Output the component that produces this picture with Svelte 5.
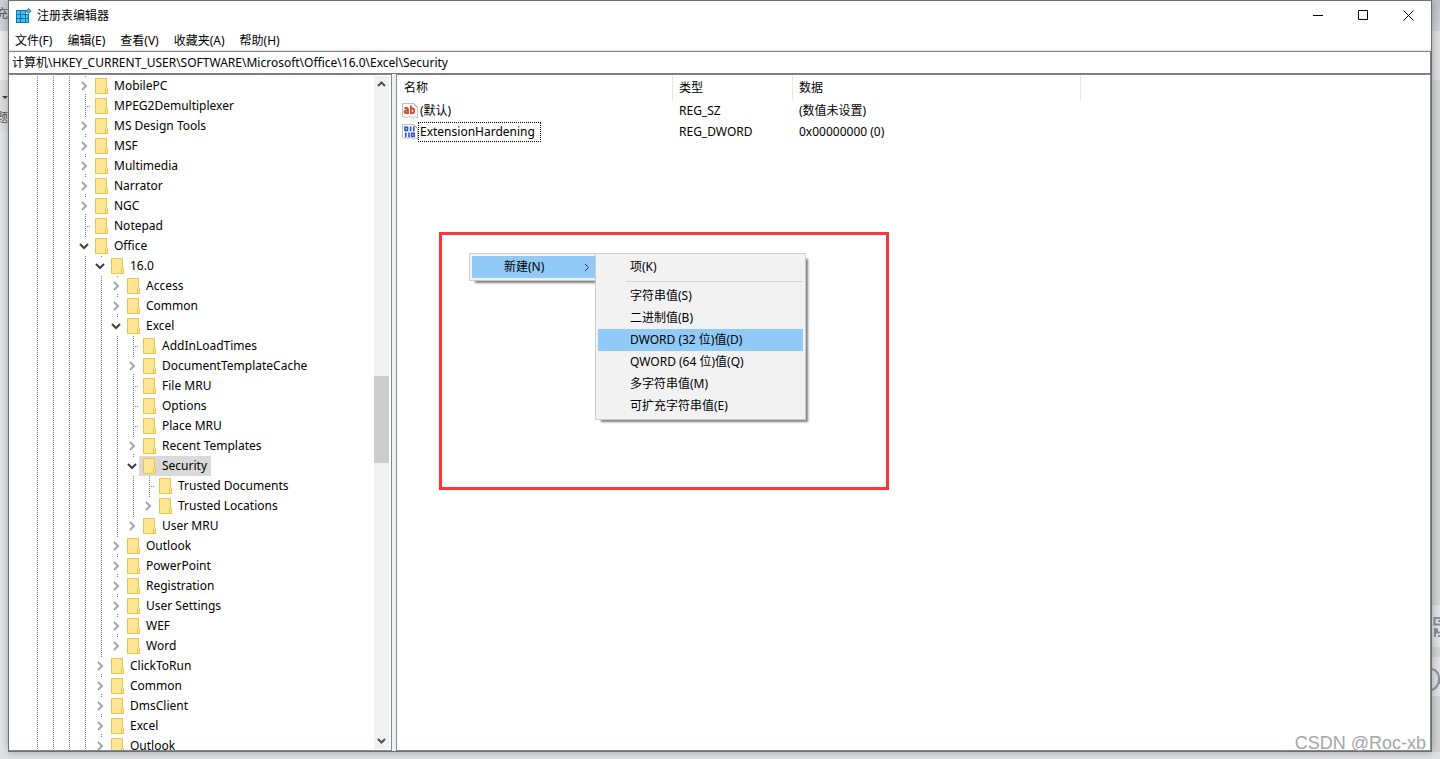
<script>
  const menus = ['文件(F)', '编辑(E)', '查看(V)', '收藏夹(A)', '帮助(H)'];

  let address = '计算机\\HKEY_CURRENT_USER\\SOFTWARE\\Microsoft\\Office\\16.0\\Excel\\Security';

  // three ancestor levels are always scrolled out of view above the first row
  const rootGuides = 3;

  const keys = [
    { name: 'MobilePC', depth: 0, state: 'closed' },
    { name: 'MPEG2Demultiplexer', depth: 0, state: 'leaf' },
    { name: 'MS Design Tools', depth: 0, state: 'closed' },
    { name: 'MSF', depth: 0, state: 'closed' },
    { name: 'Multimedia', depth: 0, state: 'closed' },
    { name: 'Narrator', depth: 0, state: 'closed' },
    { name: 'NGC', depth: 0, state: 'closed' },
    { name: 'Notepad', depth: 0, state: 'leaf' },
    { name: 'Office', depth: 0, state: 'open' },
    { name: '16.0', depth: 1, state: 'open' },
    { name: 'Access', depth: 2, state: 'closed' },
    { name: 'Common', depth: 2, state: 'closed' },
    { name: 'Excel', depth: 2, state: 'open' },
    { name: 'AddInLoadTimes', depth: 3, state: 'leaf' },
    { name: 'DocumentTemplateCache', depth: 3, state: 'closed' },
    { name: 'File MRU', depth: 3, state: 'leaf' },
    { name: 'Options', depth: 3, state: 'leaf' },
    { name: 'Place MRU', depth: 3, state: 'leaf' },
    { name: 'Recent Templates', depth: 3, state: 'closed' },
    { name: 'Security', depth: 3, state: 'open', selected: true },
    { name: 'Trusted Documents', depth: 4, state: 'leaf' },
    { name: 'Trusted Locations', depth: 4, state: 'closed', last: true },
    { name: 'User MRU', depth: 3, state: 'closed', last: true },
    { name: 'Outlook', depth: 2, state: 'closed' },
    { name: 'PowerPoint', depth: 2, state: 'closed' },
    { name: 'Registration', depth: 2, state: 'closed' },
    { name: 'User Settings', depth: 2, state: 'closed' },
    { name: 'WEF', depth: 2, state: 'closed' },
    { name: 'Word', depth: 2, state: 'closed', last: true },
    { name: 'ClickToRun', depth: 1, state: 'closed' },
    { name: 'Common', depth: 1, state: 'closed' },
    { name: 'DmsClient', depth: 1, state: 'closed' },
    { name: 'Excel', depth: 1, state: 'closed' },
    { name: 'Outlook', depth: 1, state: 'closed' }
  ];

  const values = [
    { name: '(默认)', type: 'REG_SZ', data: '(数值未设置)', kind: 'text' },
    { name: 'ExtensionHardening', type: 'REG_DWORD', data: '0x00000000 (0)', kind: 'binary', focused: true }
  ];

  const newItems = [
    { label: '项(K)', divider: true },
    { label: '字符串值(S)' },
    { label: '二进制值(B)' },
    { label: 'DWORD (32 位)值(D)', active: true },
    { label: 'QWORD (64 位)值(Q)' },
    { label: '多字符串值(M)' },
    { label: '可扩充字符串值(E)' }
  ];
</script>

<div class="desktop">
  <div class="behind left" aria-hidden="true">
    <span class="top">充</span>
    <span class="bottom"><i></i>题</span>
  </div>

  <main class="window">
    <header class="title-bar">
      <svg class="app-icon" width="16" height="16" viewBox="0 0 16 16">
        <path d="M0 2h10v4h3v9H0z" fill="#1673a8" />
        <path d="M1 3h3v3H1zM5 3h4v3H5zM1 7h3v3H1zM5 7h4v3H5zM10 7h2v3h-2zM1 11h3v3H1zM5 11h4v3H5zM10 11h2v3h-2z" fill="#3fc3f5" />
        <path d="M12.500 0l3 3-3 3-3-3z" fill="#1d86bb" />
        <path d="M12.500 1.500l1.500 1.500-1.500 1.500L11 3z" fill="#58c8ef" />
      </svg>
      <h1>注册表编辑器</h1>
      <button class="caption" aria-label="最小化">
        <svg width="11" height="11" viewBox="0 0 11 11"><path d="M0 5.500h10" /></svg>
      </button>
      <button class="caption" aria-label="最大化">
        <svg width="11" height="11" viewBox="0 0 11 11"><path d="M.5.5h9v9h-9z" /></svg>
      </button>
      <button class="caption" aria-label="关闭">
        <svg width="11" height="11" viewBox="0 0 11 11"><path d="M.5.5l10 10M10.500.5l-10 10" /></svg>
      </button>
    </header>

    <nav class="menu-bar">
      {#each menus as menu}
        <button>{menu}</button>
      {/each}
    </nav>

    <input class="address" aria-label="地址" bind:value={address} />

    <div class="panes">
      <section class="tree-pane">
        <ul class="tree">
          {#each keys as key}
            <li>
              {#each Array(rootGuides + key.depth) as _}
                <span class="guide"></span>
              {/each}
              <span class="branch {key.state}" class:last={key.last}>
                {#if key.state !== 'leaf'}
                  <button class="expander" aria-label={key.name}>
                    {#if key.state === 'open'}
                      <svg width="10" height="10" viewBox="0 0 10 10"><path d="M1 3l4 4 4-4" stroke="#404040" /></svg>
                    {:else}
                      <svg width="10" height="10" viewBox="0 0 10 10"><path d="M3 1l4 4-4 4" stroke="#a6a6a6" /></svg>
                    {/if}
                  </button>
                {/if}
              </span>
              <span class="key" class:selected={key.selected}>
                <svg width="13" height="16" viewBox="0 0 13 16">
                  <path d="M.5.5h11v9l1 1v5H.5z" fill="#ffe694" stroke="#eac24d" />
                  <path d="M10.500 15.500v-5l1-1 1 1v5z" fill="#ffe694" stroke="#eac24d" />
                </svg>
                {key.name}
              </span>
            </li>
          {/each}
        </ul>
        <div class="scrollbar">
          <button aria-label="向上滚动">
            <svg width="9" height="9" viewBox="0 0 9 9"><path d="M1 6l3.500-3.500L8 6" /></svg>
          </button>
          <div class="track">
            <div class="thumb"></div>
          </div>
          <button aria-label="向下滚动">
            <svg width="9" height="9" viewBox="0 0 9 9"><path d="M1 3l3.500 3.500L8 3" /></svg>
          </button>
        </div>
      </section>

      <section class="list-pane">
        <table>
          <thead>
            <tr>
              <th class="col-name">名称</th>
              <th class="col-type">类型</th>
              <th class="col-data">数据</th>
              <th></th>
            </tr>
          </thead>
          <tbody>
            {#each values as value}
              <tr>
                <td>
                  <div class="value">
                    <svg width="16" height="16" viewBox="0 0 16 16">
                      <path d="M.5.5h11l4 4v10.500l-2-1-2 1.500-3-2-4 1-4-1z" fill="#fafafa" stroke="#c0c0c0" />
                      <path d="M11.500.5l4 4" fill="none" stroke="#8c8c8c" />
                      {#if value.kind === 'text'}
                        <g fill="none" stroke="#d9482b" stroke-width="1.800">
                          <path d="M2.500 5h2q1.500 0 1.500 1.500V11M6 7.500H4q-1.500 0-1.500 1.300T4 10.200h2M8.900 2.500V11M8.900 5.500h1.800q1.500 0 1.500 2.300t-1.500 2.400H8.900" />
                        </g>
                      {:else}
                        <g fill="none" stroke="#2b4fd0" stroke-width="1.600">
                          <path d="M3 3.300h2.500v3.200H3zM8.600 2.500v4.800M11.800 2.500v4.800M3.800 8.500v4.800M7 8.500v4.800M9.600 9.300h2.500v3.200H9.600z" />
                        </g>
                      {/if}
                    </svg>
                    <span class:focused={value.focused}>{value.name}</span>
                  </div>
                </td>
                <td>{value.type}</td>
                <td>{value.data}</td>
                <td></td>
              </tr>
            {/each}
          </tbody>
        </table>

        <div class="highlight-frame">
          <div class="menus">
            <div class="popup parent" role="menu">
              <button class="active" role="menuitem">
                新建(N)
                <svg width="6" height="9" viewBox="0 0 6 9"><path d="M1 1l3.500 3.500L1 8" /></svg>
              </button>
            </div>
            <div class="popup" role="menu">
              {#each newItems as item}
                <button class:active={item.active} role="menuitem">{item.label}</button>
                {#if item.divider}
                  <hr />
                {/if}
              {/each}
            </div>
          </div>
        </div>
      </section>
    </div>

    <span class="watermark">CSDN @Roc-xb</span>
  </main>

  <div class="behind right" aria-hidden="true">
    <svg width="8" height="96" viewBox="0 0 8 96">
      <path d="M0 5h8v42H0zM0 57h8v39H0z" fill="#e2e2e4" />
      <path d="M2 18h6M2.500 17v8M2 24.500h6M6 21h2M3 28v9M3 29.500h2v3h3M6 36h2" fill="none" stroke="#8d8da3" stroke-width="2" />
      <path d="M0 69q7 2 7 10t-7 11M8 77v7" fill="none" stroke="#8d8da3" stroke-width="2" />
    </svg>
  </div>
</div>

<style>
  :global(body) {
    margin: 0;
  }

  .desktop {
    display: flex;
    height: 100vh;
    box-sizing: border-box;
    padding-bottom: 7px;
    background: #dfe0e2;
    color: #000;
    font-family: 'Noto Sans', 'Noto Sans CJK SC', sans-serif;
    font-size: 12px;
    line-height: 20px;
    overflow: hidden;
  }

  button {
    padding: 0;
    border: none;
    background: none;
    color: inherit;
    font: inherit;
  }

  .behind {
    flex: 0 0 8px;
    overflow: hidden;
    color: #555;
  }

  .left {
    background: linear-gradient(#cfd0d6 31px, #ececec 31px, #ececec 80px, #dfdfdf 80px, #dfdfdf 132px, #e4e5e7 132px);
  }

  .left span {
    display: flex;
    flex-direction: column;
    align-items: flex-end;
  }

  .left .top {
    padding-top: 4px;
  }

  .left .bottom {
    padding-top: 72px;
  }

  .left i {
    margin-bottom: 6px;
    border: 3px solid transparent;
    border-top-color: #444;
  }

  .right {
    display: flex;
    align-items: flex-end;
    padding-bottom: 56px;
    background: linear-gradient(#c2c3ca, #cfd0d6 31px, #dedede 31px, #dedede 80px, #d2d3d5 80px, #d2d3d5);
  }

  .window {
    position: relative;
    flex: 1;
    min-width: 0;
    display: flex;
    flex-direction: column;
    border: 1px solid #6b6e73;
    background: #fff;
    box-shadow: 0 0 8px rgba(0, 0, 0, 0.3);
  }

  .title-bar {
    display: flex;
    align-items: center;
    height: 29px;
    padding-left: 7px;
  }

  h1 {
    flex: 1;
    margin: 0 0 0 5px;
    font-size: 12px;
    font-weight: 400;
  }

  .caption {
    display: flex;
    align-items: center;
    justify-content: center;
    width: 45px;
    height: 29px;
  }

  .caption path {
    fill: none;
    stroke: #000;
  }

  .menu-bar {
    display: flex;
    gap: 15px;
    height: 17px;
    padding: 2px 0 0 6px;
    border-bottom: 2px solid #f0f0f0;
  }

  .menu-bar button {
    height: 18px;
    line-height: 18px;
  }

  .address {
    height: 23px;
    box-sizing: border-box;
    padding: 0 3px 2px;
    border: 1px solid #7a7a7a;
    border-left: none;
    background: #fff;
    color: inherit;
    font: inherit;
    outline: none;
  }

  .panes {
    flex: 1;
    min-height: 0;
    display: flex;
    gap: 4px;
    background: #f0f0f0;
  }

  .tree-pane {
    flex: 0 0 382px;
    display: flex;
    border: 1px solid #828790;
    border-left: none;
    background: #fff;
  }

  .tree {
    flex: 1;
    min-width: 0;
    margin: 0;
    padding: 1px 0 0 20px;
    list-style: none;
    overflow: hidden;
  }

  li {
    display: flex;
    height: 20px;
    white-space: nowrap;
  }

  .guide {
    width: 16px;
    background: repeating-linear-gradient(#808080 0 1px, transparent 1px 2px) 8px 0 / 1px 100% no-repeat;
  }

  .branch {
    display: flex;
    align-items: center;
    width: 14px;
    background: repeating-linear-gradient(#808080 0 1px, transparent 1px 2px) 8px 0 / 1px 100% no-repeat;
  }

  .branch.leaf {
    background:
      repeating-linear-gradient(#808080 0 1px, transparent 1px 2px) 8px 0 / 1px 100% no-repeat,
      repeating-linear-gradient(90deg, #808080 0 1px, transparent 1px 2px) 8px 10px / 6px 1px no-repeat;
  }

  .branch.open,
  .branch.last {
    background-size: 1px 4px;
  }

  .expander {
    display: flex;
    justify-content: center;
    width: 14px;
    padding: 3px 0;
    background: #fff;
  }

  .expander path {
    fill: none;
    stroke-width: 2;
  }

  .key {
    display: flex;
    align-items: center;
    gap: 6px;
    padding: 0 4px;
  }

  .selected {
    background: #d9d9d9;
  }

  .scrollbar {
    display: flex;
    flex-direction: column;
    width: 15px;
    margin: 1px 2px 1px 0;
    background: #f0f0f0;
  }

  .scrollbar button {
    display: flex;
    align-items: center;
    justify-content: center;
    height: 17px;
  }

  .scrollbar path {
    fill: none;
    stroke: #505050;
    stroke-width: 2;
  }

  .track {
    flex: 1;
    display: flex;
    flex-direction: column;
  }

  .track::before {
    content: '';
    flex: 283;
  }

  .thumb {
    flex: 86;
    background: #cdcdcd;
  }

  .track::after {
    content: '';
    flex: 269;
  }

  .list-pane {
    position: relative;
    flex: 1;
    min-width: 0;
    border: 1px solid #828790;
    background: #fff;
  }

  table {
    width: 100%;
    border-collapse: collapse;
    table-layout: fixed;
  }

  th,
  td {
    box-sizing: border-box;
    padding: 0 0 0 6px;
    font-weight: 400;
    text-align: left;
    white-space: nowrap;
  }

  th {
    height: 25px;
  }

  th:not(:last-child) {
    background: linear-gradient(#e5e5e5, #e5e5e5) right / 1px 100% no-repeat;
  }

  td {
    height: 21px;
  }

  th:first-child {
    padding-left: 7px;
  }

  td:first-child {
    padding-left: 5px;
  }

  .col-name {
    width: 276px;
  }

  .col-type {
    width: 120px;
  }

  .col-data {
    width: 288px;
  }

  .value {
    display: flex;
    align-items: center;
  }

  .value span {
    padding: 0 5px 0 1px;
    border: 1px solid transparent;
    line-height: 18px;
  }

  .value .focused {
    border: 1px dotted #000;
  }

  .highlight-frame {
    position: absolute;
    top: 157px;
    left: 42px;
    width: 444px;
    height: 252px;
    border: 3px solid #fa3737;
  }

  .menus {
    display: flex;
    align-items: flex-start;
    padding: 18px 0 0 27px;
  }

  .popup {
    display: flex;
    flex-direction: column;
    box-sizing: border-box;
    width: 211px;
    padding: 2px;
    border: 1px solid #ccc;
    background: #f2f2f2;
    box-shadow: 4px 4px 2px -2px rgba(0, 0, 0, 0.5);
  }

  .parent {
    width: 126px;
    padding-right: 0;
    border-right: none;
  }

  .popup button {
    display: flex;
    align-items: center;
    justify-content: space-between;
    height: 22px;
    padding: 0 5px 0 32px;
    text-align: left;
  }

  .popup .active {
    background: #91c9f7;
  }

  .popup svg path {
    fill: none;
    stroke: #333;
  }

  .popup hr {
    width: 177px;
    margin: 3px 0 3px auto;
    border: none;
    border-top: 1px solid #d4d4d4;
  }

  .watermark {
    position: absolute;
    right: 5px;
    bottom: -2px;
    color: #a5a5a5;
    font-family: 'Liberation Sans', sans-serif;
    font-size: 18px;
  }
</style>
